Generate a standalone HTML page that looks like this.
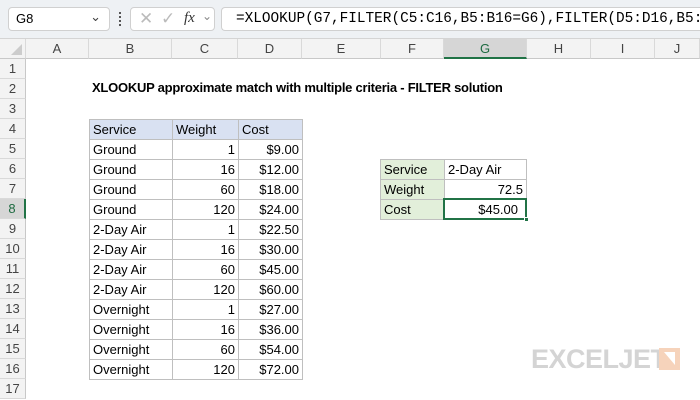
<!DOCTYPE html>
<html><head><style>
*{margin:0;padding:0;box-sizing:border-box}
body{width:700px;height:400px;overflow:hidden;background:#fff;font-family:"Liberation Sans",Calibri,sans-serif;position:relative}
.top{position:absolute;left:0;top:0;width:700px;height:39px;background:#eef1f4;border-bottom:1px solid #d4d4d4;overflow:hidden}
.box{position:absolute;background:#fff;border:1px solid #d0d0d0;border-radius:4px;height:24px;top:7px;overflow:hidden}
.ch{position:absolute;top:39px;height:20px;background:#f3f3f3;border-right:1px solid #d9d9d9;border-bottom:1px solid #c8c8c8;font-size:13px;color:#444;text-align:center;line-height:19px}
.rh{position:absolute;left:0;width:26px;height:20px;background:#f3f3f3;border-bottom:1px solid #d9d9d9;border-right:1px solid #c8c8c8;font-size:13px;color:#444;text-align:center;line-height:20px}
.c{position:absolute;height:21px;border:1px solid #bfbfbf;font-size:13px;line-height:19px;padding:0 3px;color:#000;white-space:nowrap}
.r{text-align:right}
.hb{background:#d9e1f2}
.hg{background:#e2efda}
</style></head><body>
<div class="top">
<div class="box" style="left:8px;width:102px"><span style="position:absolute;left:7px;top:3px;font-size:13px">G8</span><span style="position:absolute;right:8px;top:1px;font-size:13px;color:#444">&#8964;</span></div>
<div style="position:absolute;left:119px;top:12px;width:2px;height:14px;border-left:2px dotted #555"></div>
<div class="box" style="left:130px;width:85px"><span style="position:absolute;left:8px;top:1px;font-size:17px;color:#bbb">&#10005;</span><span style="position:absolute;left:30px;top:1px;font-size:17px;color:#bbb">&#10003;</span><span style="position:absolute;left:53px;top:2px;font-size:15px;font-style:italic;font-family:'Liberation Serif',serif;color:#333">fx</span><span style="position:absolute;left:71px;top:1px;font-size:12px;color:#888">&#8964;</span></div>
<div class="box" style="left:221px;width:479px;border-radius:4px 0 0 4px;border-right:none"><span style="position:absolute;left:14px;top:3px;font-family:'Liberation Mono',monospace;font-size:14.4px;color:#000;white-space:nowrap">=XLOOKUP(G7,FILTER(C5:C16,B5:B16=G6),FILTER(D5:D16,B5:B16=G6))</span></div>
</div>

<div class="ch" style="left:0;width:26px"><div style="position:absolute;right:3px;bottom:3px;width:0;height:0;border-left:11px solid transparent;border-bottom:11px solid #ccc"></div></div>
<div class="ch" style="left:26px;width:63px">A</div>
<div class="ch" style="left:89px;width:83px">B</div>
<div class="ch" style="left:172px;width:66px">C</div>
<div class="ch" style="left:238px;width:64px">D</div>
<div class="ch" style="left:302px;width:79px">E</div>
<div class="ch" style="left:381px;width:63px">F</div>
<div class="ch" style="left:444px;width:83px;background:#d6d6d6;border-bottom:2px solid #217346;color:#1e6b41">G</div>
<div class="ch" style="left:527px;width:64px">H</div>
<div class="ch" style="left:591px;width:64px">I</div>
<div class="ch" style="left:655px;width:45px">J</div>

<div class="rh" style="top:59px">1</div><div class="rh" style="top:79px">2</div><div class="rh" style="top:99px">3</div><div class="rh" style="top:119px">4</div>
<div class="rh" style="top:139px">5</div><div class="rh" style="top:159px">6</div><div class="rh" style="top:179px">7</div>
<div class="rh" style="top:199px;background:#d6d6d6;border-right:2px solid #217346;color:#1e6b41">8</div>
<div class="rh" style="top:219px">9</div><div class="rh" style="top:239px">10</div><div class="rh" style="top:259px">11</div><div class="rh" style="top:279px">12</div>
<div class="rh" style="top:299px">13</div><div class="rh" style="top:319px">14</div><div class="rh" style="top:339px">15</div><div class="rh" style="top:359px">16</div><div class="rh" style="top:379px">17</div>

<div style="position:absolute;left:92px;top:80px;font-size:13px;font-weight:bold;white-space:nowrap;letter-spacing:-0.25px">XLOOKUP approximate match with multiple criteria - FILTER solution</div>

<div class="c hb" style="left:89px;top:119px;width:84px">Service</div><div class="c hb" style="left:172px;top:119px;width:67px">Weight</div><div class="c hb" style="left:238px;top:119px;width:65px">Cost</div>
<div class="c" style="left:89px;top:139px;width:84px">Ground</div><div class="c r" style="left:172px;top:139px;width:67px">1</div><div class="c r" style="left:238px;top:139px;width:65px">$9.00</div>
<div class="c" style="left:89px;top:159px;width:84px">Ground</div><div class="c r" style="left:172px;top:159px;width:67px">16</div><div class="c r" style="left:238px;top:159px;width:65px">$12.00</div>
<div class="c" style="left:89px;top:179px;width:84px">Ground</div><div class="c r" style="left:172px;top:179px;width:67px">60</div><div class="c r" style="left:238px;top:179px;width:65px">$18.00</div>
<div class="c" style="left:89px;top:199px;width:84px">Ground</div><div class="c r" style="left:172px;top:199px;width:67px">120</div><div class="c r" style="left:238px;top:199px;width:65px">$24.00</div>
<div class="c" style="left:89px;top:219px;width:84px">2-Day Air</div><div class="c r" style="left:172px;top:219px;width:67px">1</div><div class="c r" style="left:238px;top:219px;width:65px">$22.50</div>
<div class="c" style="left:89px;top:239px;width:84px">2-Day Air</div><div class="c r" style="left:172px;top:239px;width:67px">16</div><div class="c r" style="left:238px;top:239px;width:65px">$30.00</div>
<div class="c" style="left:89px;top:259px;width:84px">2-Day Air</div><div class="c r" style="left:172px;top:259px;width:67px">60</div><div class="c r" style="left:238px;top:259px;width:65px">$45.00</div>
<div class="c" style="left:89px;top:279px;width:84px">2-Day Air</div><div class="c r" style="left:172px;top:279px;width:67px">120</div><div class="c r" style="left:238px;top:279px;width:65px">$60.00</div>
<div class="c" style="left:89px;top:299px;width:84px">Overnight</div><div class="c r" style="left:172px;top:299px;width:67px">1</div><div class="c r" style="left:238px;top:299px;width:65px">$27.00</div>
<div class="c" style="left:89px;top:319px;width:84px">Overnight</div><div class="c r" style="left:172px;top:319px;width:67px">16</div><div class="c r" style="left:238px;top:319px;width:65px">$36.00</div>
<div class="c" style="left:89px;top:339px;width:84px">Overnight</div><div class="c r" style="left:172px;top:339px;width:67px">60</div><div class="c r" style="left:238px;top:339px;width:65px">$54.00</div>
<div class="c" style="left:89px;top:359px;width:84px">Overnight</div><div class="c r" style="left:172px;top:359px;width:67px">120</div><div class="c r" style="left:238px;top:359px;width:65px">$72.00</div>

<div class="c hg" style="left:380px;top:159px;width:65px">Service</div><div class="c" style="left:444px;top:159px;width:83px">2-Day Air</div>
<div class="c hg" style="left:380px;top:179px;width:65px">Weight</div><div class="c r" style="left:444px;top:179px;width:83px">72.5</div>
<div class="c hg" style="left:380px;top:199px;width:65px">Cost</div><div class="c r" style="left:443px;top:198px;width:84px;height:22px;border:2px solid #217346;padding-right:7px">$45.00</div>
<div style="position:absolute;left:524px;top:217px;width:5px;height:5px;background:#217346;border:1px solid #fff"></div>

<div style="position:absolute;left:531px;top:344px;font-size:27px;font-weight:bold;color:#d4d4d4;letter-spacing:-0.5px">EXCELJET</div>
<div style="position:absolute;left:659px;top:348px;width:21px;height:22px;background:#f6d3bb"><div style="position:absolute;left:5px;top:4px;width:0;height:0;border-left:11px solid transparent;border-top:13px solid #fff"></div></div>
</body></html>
